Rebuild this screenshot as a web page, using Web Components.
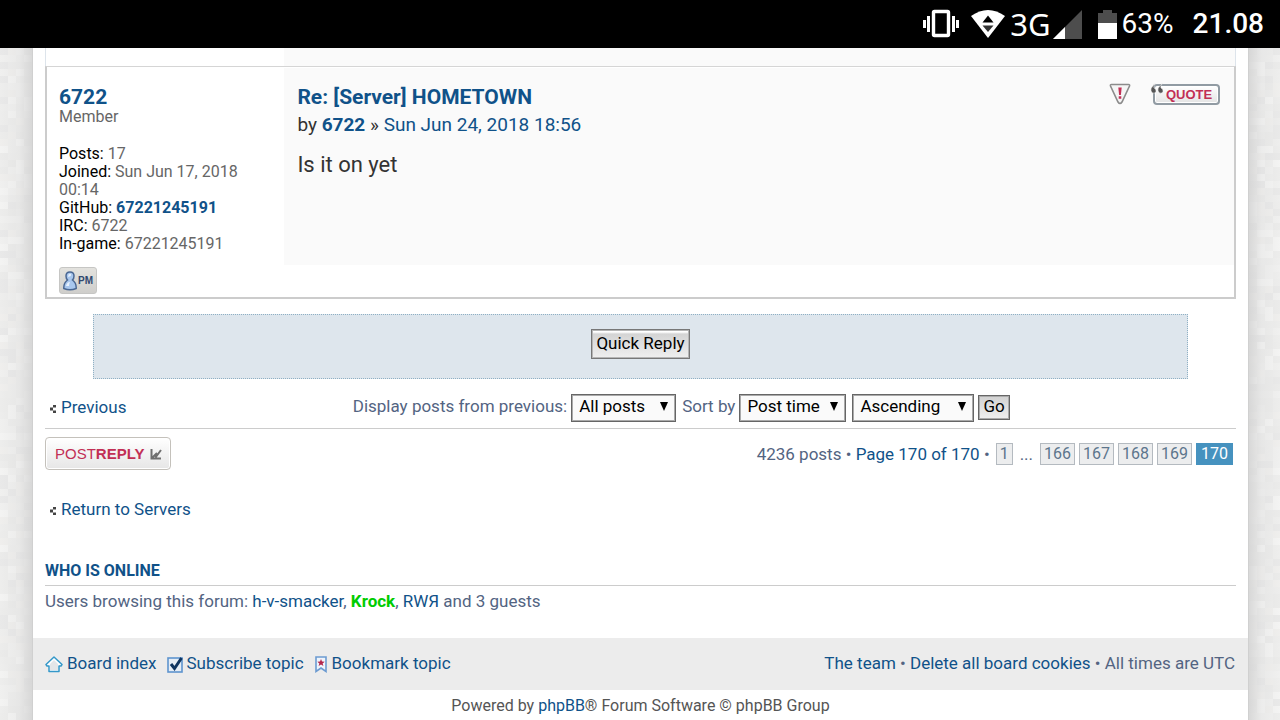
<!DOCTYPE html>
<html lang="en">
<head>
<meta charset="utf-8">
<meta name="viewport" content="width=device-width, initial-scale=1">
<title>Re: [Server] HOMETOWN</title>
<style>
html, body { margin: 0; min-height: 100%; }
body {
  font: 17px/20px Roboto, "Liberation Sans", sans-serif;
  color: #536482;
  background: #ececeb;
  overflow: hidden;
  height: 100vh;
}
</style>
</head>
<body>
<status-bar></status-bar>
<forum-page>
  <forum-thread>
    <forum-post subject="Re: [Server] HOMETOWN" author="6722" date="Sun Jun 24, 2018 18:56">
      <user-profile slot="profile" name="6722" rank="Member">
        <profile-field label="Posts:">17</profile-field>
        <profile-field label="Joined:">Sun Jun 17, 2018 00:14</profile-field>
        <profile-field label="GitHub:" link>67221245191</profile-field>
        <profile-field label="IRC:">6722</profile-field>
        <profile-field label="In-game:">67221245191</profile-field>
      </user-profile>
      Is it on yet
    </forum-post>
  </forum-thread>
  <quick-reply></quick-reply>
  <sort-bar></sort-bar>
  <topic-actions></topic-actions>
  <back-link>Return to Servers</back-link>
  <who-online></who-online>
  <forum-footer slot="footer"></forum-footer>
</forum-page>

<script>
function define(name, markup, setup) {
  const template = document.createElement('template');
  template.innerHTML = '<style>:host,*{box-sizing:border-box}a{color:#105289;text-decoration:none}a:hover{text-decoration:underline}svg{display:block;flex:none}</style>' + markup;
  customElements.define(name, class extends HTMLElement {
    connectedCallback() {
      if (this.shadowRoot) return;
      const root = this.attachShadow({ mode: 'open' });
      root.append(template.content.cloneNode(true));
      root.querySelectorAll('[data-attr]').forEach(n => { n.textContent = this.getAttribute(n.dataset.attr); });
      if (setup) setup.call(this, root);
    }
  });
}

define('status-bar', `
<style>
:host { display: flex; align-items: center; justify-content: flex-end; height: 48px; padding: 0 16px; background: #000; color: #fff; font-size: 28px; line-height: 48px; position: relative; z-index: 1; }
.net { font: 400 31px/48px "Noto Sans", "Open Sans", sans-serif; margin: 0 2px 0 5px; }
.battery { margin: 0 5px 0 16px; }
.time { font-weight: 500; margin-left: 19px; }
</style>
<svg width="36" height="30" viewBox="0 0 36 30" aria-label="Vibrate"><rect x="10.500" y="2.500" width="15" height="24" rx="1" fill="none" stroke="#fff" stroke-width="3.400"/><path d="M5.500 7v16M30.500 7v16" stroke="#fff" stroke-width="3"/><path d="M1.500 11v8M34.500 11v8" stroke="#fff" stroke-width="3"/></svg>
<svg style="margin-left:12px" width="34" height="30" viewBox="0 0 34 30" aria-label="Wi-Fi"><path d="M0 7Q17-5 34 7L17 29Z" fill="#fff"/><path d="M11.500 13.500 17 6.500l5.500 7z" fill="#000"/><path d="M11.500 16.500h11L17 23z" fill="#333"/></svg>
<span class="net">3G</span>
<svg width="29" height="29" viewBox="0 0 29 29" aria-label="Signal"><path d="M29 0v29H0z" fill="#4d4d4d"/><path d="M12 17v12H0z" fill="#fff"/></svg>
<svg class="battery" width="19" height="29" viewBox="0 0 19 29" aria-label="Battery"><path d="M0 3h5V0h9v3h5v10H0z" fill="#4d4d4d"/><path d="M0 13h19v16H0z" fill="#fff"/></svg>
<span>63%</span><span class="time">21.08</span>`);

/* Mottled paper strip shown on both sides of the page. */
define('paper-edge', `
<style>
:host { display: block; overflow: hidden; position: relative; background: #e9e9e8; }
svg { position: absolute; inset: 0; }
.shade { position: absolute; inset: 0; background: linear-gradient(to right, rgba(240,240,239,.3), rgba(225,225,225,.45) 60%, rgba(212,212,212,.85)); }
:host([side="right"]) .shade { transform: scaleX(-1); }
</style>
<svg width="32" height="100%"></svg><div class="shade"></div>`, function (root) {
  const svg = root.querySelector('svg');
  const tones = ['#e9e9e8', '#ededec', '#f0f0ef', '#ebebea', '#efeeec', '#ececeb', '#e6e6e6', '#f5f5f4'];
  let seed = this.getAttribute('side') === 'right' ? 29 : 7;
  const next = () => (seed = (seed * 1103 + 377) % 7919);
  for (let y = 0; y < 1400; y += 7) {
    for (let x = 0; x < 32; x += 8) {
      const r = document.createElementNS('http://www.w3.org/2000/svg', 'rect');
      r.setAttribute('x', x); r.setAttribute('y', y);
      r.setAttribute('width', 8 + next() % 4 * 8); r.setAttribute('height', 7);
      r.setAttribute('fill', tones[next() % tones.length]);
      svg.append(r);
    }
  }
});

define('forum-page', `
<style>
:host { display: grid; grid-template-columns: 32px minmax(0, 1fr) 31px; min-height: calc(100vh - 48px); }
main { background: #fff; border: solid #d0d0d0; border-width: 0 1px; }
.body { padding: 0 12px; }
</style>
<paper-edge side="left"></paper-edge>
<main><div class="body"><slot></slot></div><slot name="footer"></slot></main>
<paper-edge side="right"></paper-edge>`);

define('forum-thread', `
<style>
:host { display: block; }
.earlier { display: grid; grid-template-columns: 1fr 4fr; height: 18px; border: solid #dde4eb; border-width: 0 1px; }
.earlier div:last-child { background: #fafafa; }
</style>
<div class="earlier"><div></div><div></div></div><slot></slot>`);

define('forum-post', `
<style>
:host { display: grid; grid-template-columns: 1fr 4fr; border: solid #ccc; border-width: 1px 2px 2px; border-top-color: #d5d5d5; min-height: 233px; }
.post { background: #fafafa; margin: 1px 0 32px; padding: 16px 14px 0 13px; display: flex; justify-content: space-between; align-items: flex-start; color: #333; }
h3 { margin: 0; font-size: 21px; line-height: 26px; font-weight: 700; }
.by { margin: 3px 0 0; font-size: 19px; line-height: 24px; }
.content { margin-top: 14px; font-size: 22px; line-height: 28px; }
.tools { display: flex; }
button { border: 0; padding: 0; background: none; font: inherit; cursor: pointer; display: block; }
.report { margin: -2px 22px 0 0; }
.quote { position: relative; width: 67px; height: 21px; border-radius: 4px; background: linear-gradient(#fff, #e4e4e4); border: 2px solid #919ba3; box-shadow: inset 0 0 0 1px #fff; color: #c22f55; font: 700 13px/17px "Liberation Sans", sans-serif; text-align: center; padding-left: 5px; }
.quote svg { position: absolute; left: -5px; top: -3px; }
</style>
<slot name="profile"></slot>
<div class="post">
  <div>
    <h3><a href="#post" data-attr="subject"></a></h3>
    <p class="by">by <a href="#user"><b data-attr="author"></b></a> » <a href="#date" data-attr="date"></a></p>
    <div class="content"><slot></slot></div>
  </div>
  <div class="tools">
    <button class="report" aria-label="Report this post"><svg width="22" height="22" viewBox="0 0 22 22"><path d="M2.500 1.500h17q1.500 0 1 1.500l-7.500 16q-2 3-4 0L1.500 3q-.5-1.500 1-1.500z" fill="#f5f5f5" stroke="#8b8b8b" stroke-width="1.600"/><path d="M9.300 4.500h3.400l-.8 7.500h-1.800zM9.700 13.300h2.600v2.500H9.700z" fill="#c22f55"/></svg></button>
    <button class="quote"><svg width="15" height="12" viewBox="0 0 15 12"><path d="M6 0Q3 2 4 5 6.500 6 6 8.500 5 11 2.500 10-2 6 6 0zM13 0q-3 2-2 5 2.500 1 2 3.500Q12 11 9.500 10 5 6 13 0z" fill="#555" stroke="#fafafa" stroke-width=".5"/></svg>QUOTE</button>
  </div>
</div>`);

define('user-profile', `
<style>
:host { display: block; padding: 19px 12px 0; font-size: 16px; line-height: 18px; color: #666; }
.name { font-size: 21px; line-height: 22px; font-weight: 700; display: block; }
.rank { margin-bottom: 19px; }
.pm { margin-top: 14px; display: flex; align-items: center; gap: 1px; width: 38px; height: 27px; padding: 0 3px; border: 1px solid #c6c6c4; border-radius: 3px; background: linear-gradient(#e3e2de, #cfcecb); color: #31486f; font: 700 10px/22px "Liberation Sans", sans-serif; cursor: pointer; }
</style>
<a class="name" href="#user" data-attr="name"></a>
<div class="rank" data-attr="rank"></div>
<slot></slot>
<button class="pm" aria-label="Send private message"><svg width="14" height="20" viewBox="0 0 14 20"><path d="M7 1q4 0 4 4 0 2.500-1.500 4Q13.500 12 13.200 17.500 7 20 .8 17.500.5 12 4.500 9 3 7.500 3 5q0-4 4-4z" fill="#a9c7ee" stroke="#4a6793" stroke-width="1.500"/><path d="M5.500 3.500q2-1.500 2.500 0T5 6zM3 15q1-4 4-4-1 2-1 4z" fill="#e7f1fd"/></svg>PM</button>`);

define('profile-field', `
<style>
:host { display: block; }
span { color: #000; }
:host([link]) { color: #105289; font-weight: 700; }
:host([link]) span { font-weight: 400; }
</style><span data-attr="label"></span> <slot></slot>`, function (root) {
  if (this.hasAttribute('link')) {
    const a = document.createElement('a');
    a.href = '#profile';
    const slot = root.querySelector('slot');
    slot.replaceWith(a);
    a.append(slot);
  }
});

define('quick-reply', `
<style>
:host { display: flex; justify-content: center; align-items: flex-start; margin: 15px 4% 0; height: 65px; padding-top: 14px; background: #dee6ed; border: 1px dotted #8fb0c4; }
button { height: 30px; padding: 0 4px 3px; border: 1px solid #777; background: linear-gradient(#fff 2px, #d4d4d4 4px, #efefef); color: #000; font: 17px/20px Roboto, sans-serif; outline: 1px solid #b5b5b5; outline-offset: -2px; }
</style><button>Quick Reply</button>`);

define('back-link', `
<style>
:host { display: block; }
a { display: inline-flex; align-items: center; gap: 5px; }
svg { margin: 4px 0 0 5px; }
</style><a href="#back"><svg width="6" height="8" viewBox="0 0 6 8"><path d="M3 0h3v2.500H3zM0 2.500h3v3H0zM3 5.500h3V8H3z" fill="#444"/></svg><slot></slot></a>`);

define('drop-down', `
<style>
:host { display: inline-grid; width: var(--w); height: 28px; }
select { grid-area: 1/1; appearance: none; width: 100%; height: 28px; border: 1px solid #666; outline: 1px solid #aaa; outline-offset: -2px; border-radius: 0; background: #fafafa; color: #000; font: 17px/20px Roboto, sans-serif; padding: 0 20px 4px 7px; }
svg { grid-area: 1/1; place-self: center end; margin: 0 8px 2px 0; pointer-events: none; }
</style><select></select><svg width="8" height="9" viewBox="0 0 8 9"><path d="M0 0h8L4 9z"/></svg>`, function (root) {
  const select = root.querySelector('select');
  select.setAttribute('aria-label', this.getAttribute('label'));
  this.getAttribute('options').split('|').forEach(t => select.add(new Option(t)));
});

define('sort-bar', `
<style>
:host { display: flex; align-items: center; height: 50px; border-bottom: 1px solid #ccc; }
back-link { margin-top: 6px; }
form { flex: 1; display: flex; justify-content: center; align-items: center; margin-top: 8px; }
form span { margin-bottom: 3px; }
button { height: 25px; padding: 0 4px 3px; margin-left: 4px; border: 1px solid #666; outline: 1px solid #aaa; outline-offset: -2px; background: linear-gradient(#d4d4d4 2px, #efefef); color: #000; font: 17px/20px Roboto, sans-serif; }
</style>
<back-link>Previous</back-link>
<form onsubmit="return false">
<span>Display posts from previous:</span>
<drop-down style="--w:105px;margin:0 6px 0 4px" label="Display posts from previous" options="All posts|1 day|7 days|2 weeks|1 month"></drop-down>
<span>Sort by</span>
<drop-down style="--w:107px;margin:0 6px 0 4px" label="Sort by" options="Post time|Author|Subject"></drop-down>
<drop-down style="--w:122px" label="Direction" options="Ascending|Descending"></drop-down>
<button>Go</button>
</form>`);

define('page-link', `
<style>
:host { display: block; }
a, strong { display: block; height: 22px; padding: 0 3px; font-size: 16px; line-height: 20px; font-weight: 400; border: 1px solid #b4bac0; background: #ecedee; color: #5c758c; }
strong { background: #4692bf; border-color: #4692bf; color: #fff; padding: 0 4px; }
</style><a href="#page"><slot></slot></a>`, function (root) {
  if (this.hasAttribute('current')) {
    const strong = document.createElement('strong');
    strong.append(document.createElement('slot'));
    root.querySelector('a').replaceWith(strong);
  }
});

define('topic-actions', `
<style>
:host { display: flex; justify-content: space-between; align-items: center; margin: 8px 0 29px; }
.reply { display: flex; align-items: center; justify-content: space-between; height: 33px; width: 126px; padding: 0 8px 0 9px; border: 1px solid #c4c1bb; border-radius: 4px; background: linear-gradient(#fff, #e6e6e6); box-shadow: inset 0 0 0 1px #fff; color: #c22f55; font: 15px/20px "Liberation Sans", sans-serif; }
nav { display: flex; align-items: center; gap: 4px; padding-right: 3px; }
.dots { margin: 0 3px; }
</style>
<button class="reply"><span>POST<b>REPLY</b></span><svg width="12" height="12" viewBox="0 0 12 12"><path d="M1.500 1v9.500H11M2 10l5-5M5.500 9.500 11 2" fill="none" stroke="#707070" stroke-width="2"/></svg></button>
<nav aria-label="Pages"><span>4236 posts • <a href="#jump">Page 170 of 170</a> •</span>
<page-link style="margin-left:2px">1</page-link><span class="dots">...</span><page-link>166</page-link><page-link>167</page-link><page-link>168</page-link><page-link>169</page-link><page-link current>170</page-link></nav>`);

define('who-online', `
<style>
:host { display: block; margin-top: 42px; padding-bottom: 27px; }
h3 { margin: 0; padding-bottom: 4px; border-bottom: 1px solid #ccc; font-size: 16px; line-height: 20px; font-weight: 700; color: #105289; text-transform: uppercase; }
p { margin: 5px 0 0; }
.mod { color: #0c0; font-weight: 700; }
</style>
<h3>Who is online</h3>
<p>Users browsing this forum: <a href="#u1">h-v-smacker</a>, <a class="mod" href="#u2">Krock</a>, <a href="#u3">RWЯ</a> and 3 guests</p>`);

define('forum-footer', `
<style>
:host { display: block; }
.bar { display: flex; justify-content: space-between; align-items: center; height: 52px; padding: 0 13px 2px 12px; background: #ececec; }
.links { display: flex; gap: 10px; }
.links a { display: flex; align-items: center; gap: 4px; }
.links svg { margin-top: 3px; }
.powered { margin: 6px 0 0; text-align: center; font-size: 16px; color: #555; }
</style>
<div class="bar">
<div class="links">
<a href="#index"><svg width="18" height="17" viewBox="0 0 18 17"><path d="M9 1 1 8.500 2 10h2v5.500h10V10h2l1-1.500z" fill="#fff" stroke="#3498c9" stroke-width="1.500" stroke-linejoin="round"/><path d="M9 4 5 8v6h8V8z" fill="#e4e6e8"/></svg>Board index</a>
<a href="#subscribe"><svg width="16" height="17" viewBox="0 0 16 17"><rect x="1" y="2" width="14" height="14" fill="#e5edf6" stroke="#5e94cf" stroke-width="1.600"/><path d="m4 8 3.500 4.500L14.500 2" fill="none" stroke="#0e3561" stroke-width="3"/></svg>Subscribe topic</a>
<a href="#bookmark"><svg width="14" height="17" viewBox="0 0 14 17"><path d="M2 1h10v14.500L7 12l-5 3.500z" fill="#eff4fb" stroke="#6c9bd1" stroke-width="1.600"/><path d="m7 3 1 2.500 2.700.2-2.100 1.700.8 2.600L7 8.600 4.600 10l.8-2.600-2.100-1.700L6 5.500z" fill="#b3264c"/></svg>Bookmark topic</a>
</div>
<div><a href="#team">The team</a> • <a href="#cookies">Delete all board cookies</a> • All times are UTC</div>
</div>
<p class="powered">Powered by <a href="#phpbb">phpBB</a>® Forum Software © phpBB Group</p>`);
</script>
</body>
</html>
